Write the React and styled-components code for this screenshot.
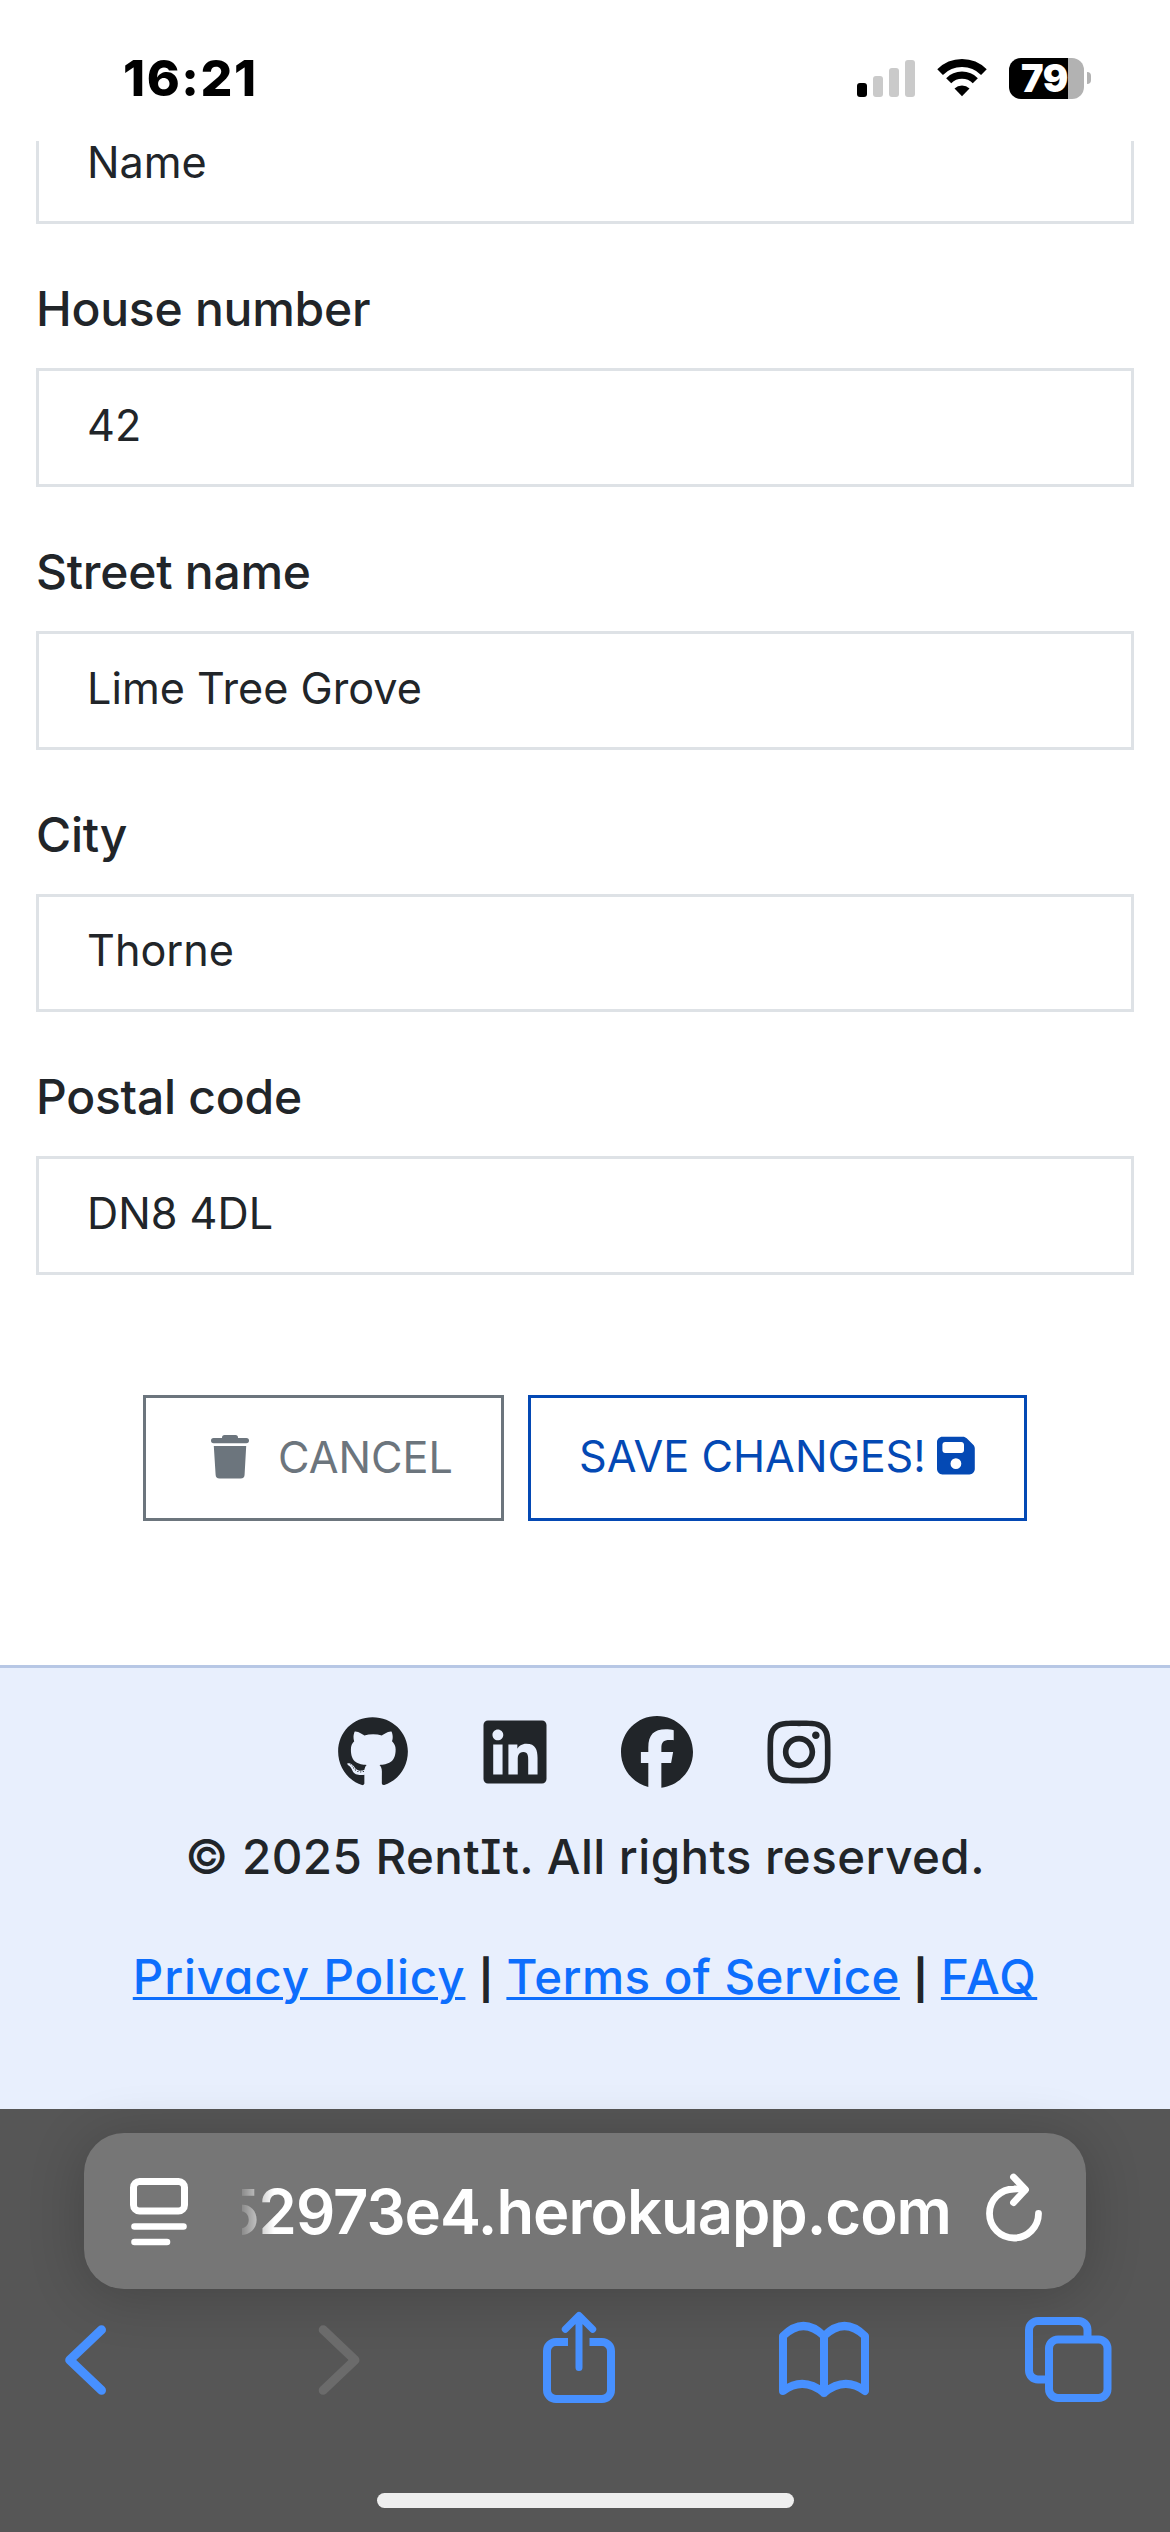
import React from 'react';
import styled, { createGlobalStyle } from 'styled-components';
import { FaGithub, FaLinkedin, FaInstagram } from 'react-icons/fa6';

const GlobalStyle = createGlobalStyle`
  *, *::before, *::after { box-sizing: border-box; }
  body { margin: 0; background: #fff; }
`;

const Screen = styled.div`
  width: 1170px;
  height: 2532px;
  display: flex;
  flex-direction: column;
  overflow: hidden;
  background: #fff;
  color: #212529;
  font-family: Inter, 'Liberation Sans', sans-serif;
`;

/* ---------- status bar ---------- */

const StatusBar = styled.header`
  flex: none;
  height: 141px;
  padding: 15px 79px 0 123px;
  display: flex;
  align-items: center;
  justify-content: space-between;
  color: #000;
`;

const Clock = styled.time`
  font-size: 50px;
  font-weight: 800;
  letter-spacing: 1.6px;
`;

const StatusIcons = styled.div`
  display: flex;
  align-items: center;
  gap: 22px;
`;

const SignalBars = styled.div`
  display: flex;
  align-items: flex-end;
  gap: 6px;
  height: 37px;
`;

const SignalBar = styled.span`
  width: 10px;
  height: ${(p) => p.$height}px;
  border-radius: 3px;
  background: ${(p) => (p.$on ? '#000' : '#cacaca')};
`;

const Battery = styled.div`
  display: flex;
  align-items: center;
  gap: 3px;
`;

const BatteryBody = styled.div`
  width: 75px;
  height: 41px;
  padding-left: 12px;
  display: flex;
  align-items: center;
  border-radius: 12px;
  background: linear-gradient(to right, #000 59px, #b2b2b2 59px);
  color: #fff;
  font-size: 38px;
  font-weight: 900;
  letter-spacing: -0.6px;
`;

const BatteryCap = styled.span`
  width: 4px;
  height: 12px;
  border-radius: 0 8px 8px 0;
  background: #b2b2b2;
`;

/* ---------- form ---------- */

const Form = styled.form`
  flex: none;
  padding: 0 36px;
  display: flex;
  flex-direction: column;
`;

const ScrolledField = styled.div`
  height: 83px;
  display: flex;
  align-items: flex-end;
  overflow: hidden;
`;

const Field = styled.div`
  padding-top: 49px;
  display: flex;
  flex-direction: column;
  gap: 23px;
`;

const Label = styled.label`
  font-size: 48px;
  font-weight: 500;
  line-height: 72px;
  letter-spacing: -0.25px;
`;

const Input = styled.input`
  width: 100%;
  height: 118.75px;
  flex: none;
  margin: 0;
  padding: 0 48px 5px;
  border: 3px solid #dee2e6;
  border-radius: 0;
  outline: none;
  background: #fff;
  color: #212529;
  font-family: inherit;
  font-size: 43.2px;
`;

const Actions = styled.div`
  padding-top: 120px;
  display: flex;
  justify-content: center;
  gap: 24px;
`;

const Button = styled.button`
  width: ${(p) => p.$width}px;
  height: 126px;
  margin: 0;
  padding: 0 0 ${(p) => p.$lift}px ${(p) => p.$inset}px;
  display: flex;
  align-items: center;
  gap: ${(p) => p.$gap}px;
  border: 3px solid ${(p) => p.$color};
  background: transparent;
  color: ${(p) => p.$color};
  font-family: inherit;
  font-size: 43.2px;
  text-transform: uppercase;
  white-space: nowrap;
`;

/* ---------- footer ---------- */

const Footer = styled.footer`
  flex: none;
  height: 444px;
  margin-top: 144px;
  padding-top: 48px;
  border-top: 3px solid #b7c7e5;
  background: #e8effd;
  display: flex;
  flex-direction: column;
  align-items: center;
  font-size: 47.5px;
  font-weight: 520;
  line-height: 72px;
  font-feature-settings: 'cv08', 'cv11';
  white-space: nowrap;
`;

const Socials = styled.nav`
  height: 72px;
  padding-left: 2px;
  display: flex;
  gap: 70px;
  font-size: 72px;
`;

const SocialLink = styled.a`
  display: flex;
  justify-content: center;
  width: 72px;
  color: #212529;
`;

const Copyright = styled.p`
  margin: 33px 0 0;
  letter-spacing: 0.45px;
`;

const Legal = styled.p`
  margin: 48px 0 0;
  display: flex;
`;

const LegalLink = styled.a`
  color: #0d6efd;
  letter-spacing: ${(p) => p.$tracking}px;
  text-decoration: underline;
  text-decoration-thickness: 3px;
  text-underline-offset: 3px;
`;

const Divider = styled.span`
  width: 41px;
  padding-top: 3px;
  font-size: 39px;
  font-weight: 700;
  text-align: center;
`;

/* ---------- browser chrome ---------- */

const BrowserBar = styled.section`
  flex: 1;
  padding-top: 24px;
  display: flex;
  flex-direction: column;
  background: #565656;
`;

const AddressBar = styled.div`
  height: 156px;
  margin: 0 84px;
  padding: 0 42px 0 46px;
  display: flex;
  align-items: center;
  border-radius: 40px;
  background: #767676;
  box-shadow: 0 6px 56px rgba(0, 0, 0, 0.2);
  color: #fff;
`;

const Address = styled.div`
  flex: 1;
  margin: 0 33px 0 54px;
  display: flex;
  justify-content: flex-end;
  overflow: hidden;
  font-size: 61.5px;
  font-weight: 580;
  letter-spacing: -1px;
  white-space: nowrap;
  mask-image: linear-gradient(to right, transparent -6px, #000 32px);
`;

const Toolbar = styled.nav`
  margin-top: 20px;
  padding: 0 52px 0 42px;
  display: flex;
  justify-content: space-between;
`;

const ToolButton = styled.a`
  display: block;
  width: 100px;
  height: 100px;
  color: ${(p) => (p.$disabled ? '#6b6b6b' : '#4790ff')};
`;

const HomeIndicator = styled.div`
  width: 417px;
  height: 15px;
  margin: 84px auto 0;
  border-radius: 8px;
  background: #eee;
`;

/* ---------- icons ---------- */

const WifiIcon = () => (
  <svg width="50" height="38" viewBox="0 0 50 38" fill="none" stroke="#000">
    <path d="M3.1 13.1A31 31 0 0 1 46.9 13.1" strokeWidth="8" />
    <path d="M11.7 21.7A18.8 18.8 0 0 1 38.3 21.7" strokeWidth="7.2" />
    <path d="M25 37.2L17.5 29.5A10.7 10.7 0 0 1 32.5 29.5Z" fill="#000" stroke="none" />
  </svg>
);

const TrashIcon = () => (
  <svg width="38" height="44" viewBox="0 0 38 44" fill="currentColor">
    <rect x="11" y="0" width="16" height="5" rx="2.5" />
    <rect x="0" y="3" width="38" height="5.2" rx="2.6" />
    <path d="M2.8 11H35.2L33.6 39.5a4 4 0 0 1-4 4H8.6a4 4 0 0 1-4-4Z" />
  </svg>
);

const SaveIcon = () => (
  <svg width="37.8" height="43.2" viewBox="0 0 448 512" fill="currentColor">
    <path d="M64 32C28.7 32 0 60.7 0 96V416c0 35.3 28.7 64 64 64H384c35.3 0 64-28.7 64-64V173.3c0-17-6.7-33.3-18.7-45.3L352 50.7C340 38.7 323.7 32 306.7 32H64zm0 96c0-17.7 14.3-32 32-32H288c17.7 0 32 14.3 32 32v64c0 17.7-14.3 32-32 32H96c-17.7 0-32-14.3-32-32V128zM224 288a64 64 0 1 1 0 128 64 64 0 1 1 0-128z" />
  </svg>
);

const FacebookIcon = () => (
  <svg width="72" height="72" viewBox="0 0 512 512" fill="currentColor">
    <path d="M512 256C512 114.6 397.4 0 256 0S0 114.6 0 256C0 376 82.7 476.8 194.2 504.5V334.2H141.4V256h52.8V222.3c0-87.1 39.4-127.5 125-127.5c16.2 0 44.2 3.2 55.7 6.4V172c-6-.6-16.5-1-29.6-1c-42 0-58.2 15.9-58.2 57.2V256h83.6l-14.4 78.2H287V510.1C413.8 494.8 512 386.9 512 256z" />
  </svg>
);

const ReaderIcon = () => (
  <svg width="58" height="70" viewBox="0 -2 58 70" fill="none" stroke="currentColor" strokeWidth="7" strokeLinecap="round">
    <rect x="3.5" y="3.5" width="51" height="29.5" rx="6" />
    <path d="M4.5 48.5H53.5M4.5 64H37" strokeWidth="6.6" />
  </svg>
);

const ReloadIcon = () => (
  <svg width="60" height="80" viewBox="0 0 60 80" fill="none" stroke="currentColor" strokeWidth="6.8" strokeLinecap="round" strokeLinejoin="round">
    <path d="M54.5 42.4A24.5 24.5 0 1 1 30 18Q36 17.6 41 18.7" />
    <path d="M29.5 6L41.5 18.7L29.5 31.6" />
  </svg>
);

const toolIconProps = {
  width: 100,
  height: 100,
  viewBox: '0 0 100 100',
  fill: 'none',
  stroke: 'currentColor',
  strokeLinejoin: 'round',
};

const BackIcon = () => (
  <svg {...toolIconProps} strokeWidth="9" strokeLinecap="round">
    <path d="M59.5 20.8L27.7 51L59.5 81.3" />
  </svg>
);

const ForwardIcon = () => (
  <svg {...toolIconProps} strokeWidth="9" strokeLinecap="round">
    <path d="M37.2 20.8L69 51L37.2 81.3" />
  </svg>
);

const ShareIcon = () => (
  <svg {...toolIconProps} strokeWidth="8">
    <path d="M38 33H26a9 9 0 0 0-9 9V81a9 9 0 0 0 9 9H72a9 9 0 0 0 9-9V42a9 9 0 0 0-9-9H59.5" />
    <path d="M49 58.5V7M35.3 20.3L49 6.5L62.7 20.3" strokeWidth="7" strokeLinecap="round" />
  </svg>
);

const BookIcon = () => (
  <svg {...toolIconProps} strokeWidth="8" strokeLinecap="round">
    <path d="M50 84V27Q29.5 7 9 27V82Q29.5 67 50 84Q70.5 67 91 82V27Q70.5 7 50 27" />
  </svg>
);

const TabsIcon = () => (
  <svg {...toolIconProps} strokeWidth="8">
    <path d="M69.5 27V21a9 9 0 0 0-9-9H20a9 9 0 0 0-9 9V61.5a9 9 0 0 0 9 9H28" />
    <rect x="31" y="30.5" width="58.5" height="58.5" rx="9" />
  </svg>
);

/* ---------- page ---------- */

const fields = [
  { id: 'house-number', label: 'House number', value: '42' },
  { id: 'street-name', label: 'Street name', value: 'Lime Tree Grove' },
  { id: 'city', label: 'City', value: 'Thorne' },
  { id: 'postal-code', label: 'Postal code', value: 'DN8 4DL' },
];

export default function App() {
  return (
    <>
      <GlobalStyle />
      <Screen>
        <StatusBar>
          <Clock>16:21</Clock>
          <StatusIcons>
            <SignalBars>
              <SignalBar $height={14} $on />
              <SignalBar $height={21} />
              <SignalBar $height={29} />
              <SignalBar $height={37} />
            </SignalBars>
            <WifiIcon />
            <Battery>
              <BatteryBody>79</BatteryBody>
              <BatteryCap />
            </Battery>
          </StatusIcons>
        </StatusBar>

        <Form>
          <ScrolledField>
            <Input defaultValue="Name" />
          </ScrolledField>
          {fields.map((field) => (
            <Field key={field.id}>
              <Label htmlFor={field.id}>{field.label}</Label>
              <Input id={field.id} defaultValue={field.value} />
            </Field>
          ))}
          <Actions>
            <Button type="button" $width={361} $inset={65} $gap={29} $lift={2} $color="#6c757d">
              <TrashIcon />
              Cancel
            </Button>
            <Button type="button" $width={499} $inset={48} $gap={11} $lift={4} $color="#0449b4">
              Save changes!
              <SaveIcon />
            </Button>
          </Actions>
        </Form>

        <Footer>
          <Socials>
            <SocialLink><FaGithub /></SocialLink>
            <SocialLink><FaLinkedin /></SocialLink>
            <SocialLink><FacebookIcon /></SocialLink>
            <SocialLink><FaInstagram /></SocialLink>
          </Socials>
          <Copyright>© 2025 RentIt. All rights reserved.</Copyright>
          <Legal>
            <LegalLink $tracking={0.88}>Privacy Policy</LegalLink>
            <Divider>|</Divider>
            <LegalLink $tracking={0.45}>Terms of Service</LegalLink>
            <Divider>|</Divider>
            <LegalLink $tracking={1.4}>FAQ</LegalLink>
          </Legal>
        </Footer>

        <BrowserBar>
          <AddressBar>
            <ReaderIcon />
            <Address>52973e4.herokuapp.com</Address>
            <ReloadIcon />
          </AddressBar>
          <Toolbar>
            <ToolButton><BackIcon /></ToolButton>
            <ToolButton $disabled><ForwardIcon /></ToolButton>
            <ToolButton><ShareIcon /></ToolButton>
            <ToolButton><BookIcon /></ToolButton>
            <ToolButton><TabsIcon /></ToolButton>
          </Toolbar>
          <HomeIndicator />
        </BrowserBar>
      </Screen>
    </>
  );
}
